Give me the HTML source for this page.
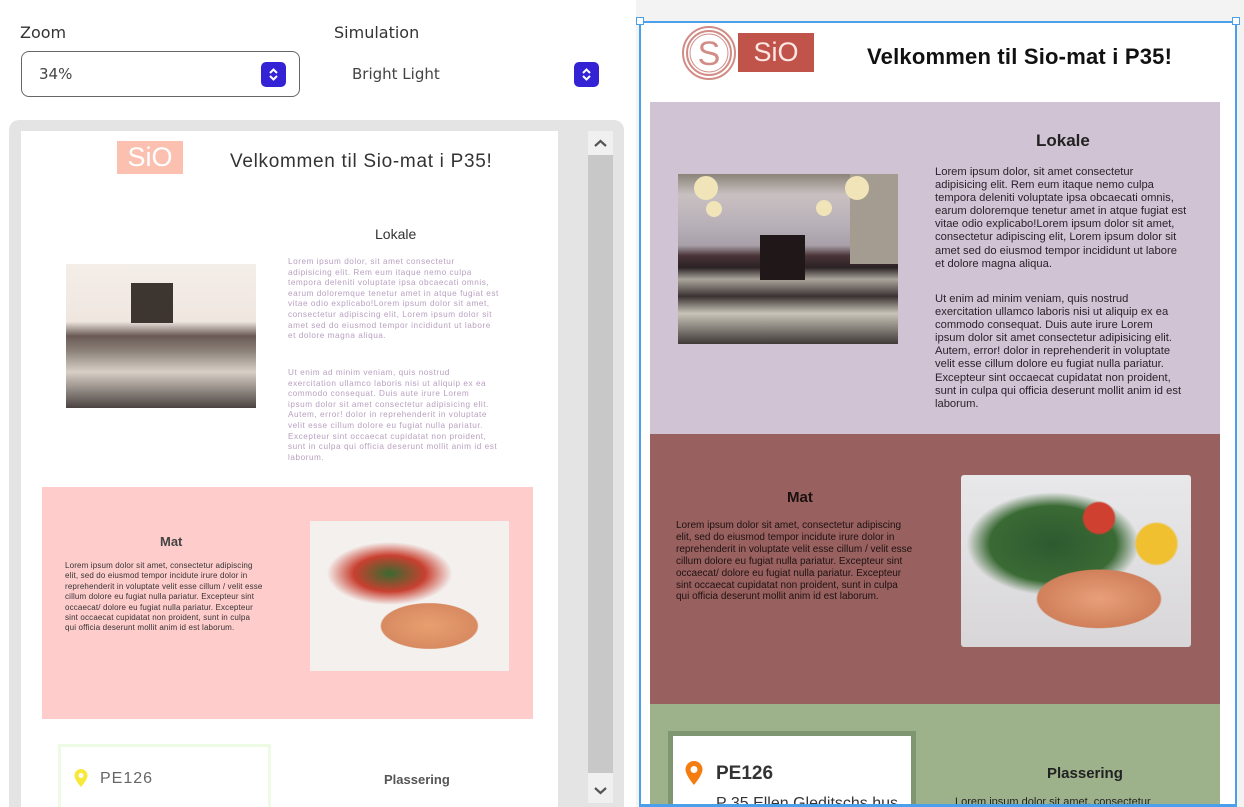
<!DOCTYPE html>
<html><head><meta charset="utf-8"><style>
*{margin:0;padding:0;box-sizing:border-box}
html,body{width:1244px;height:807px;overflow:hidden}
body{background:#fff;font-family:"Liberation Sans",Arial,sans-serif;position:relative}
.a{position:absolute}
.lbl{font-family:"DejaVu Sans","Liberation Sans",sans-serif;font-size:16px;color:#333}
.sel{font-family:"DejaVu Sans","Liberation Sans",sans-serif;font-size:15px;color:#444}
.btn{width:25px;height:25px;background:#3323d4;border-radius:5px}
.btn svg{display:block}
.rt{font-size:11.2px;line-height:13.1px;color:#2a1f2a;white-space:nowrap}
.lt{font-size:8.2px;line-height:10.6px;color:#b8a0c0;white-space:nowrap;letter-spacing:.55px}
</style></head><body>
<div class="a lbl" style="left:20px;top:23px">Zoom</div>
<div class="a lbl" style="left:334px;top:23px">Simulation</div>
<div class="a" style="left:21px;top:51px;width:279px;height:46px;border:1px solid #666;border-radius:8px"></div>
<div class="a sel" style="left:39px;top:65px">34%</div>
<div class="a btn" style="left:261px;top:62px"><svg width="25" height="25"><path d="M9 11l3.5-3.5L16 11M9 14l3.5 3.5L16 14" stroke="#fff" stroke-width="2" fill="none"/></svg></div>
<div class="a sel" style="left:352px;top:65px">Bright Light</div>
<div class="a btn" style="left:574px;top:62px"><svg width="25" height="25"><path d="M9 11l3.5-3.5L16 11M9 14l3.5 3.5L16 14" stroke="#fff" stroke-width="2" fill="none"/></svg></div>

<div class="a" style="left:9px;top:120px;width:615px;height:687px;background:#e4e4e4;border-radius:10px 10px 0 0"></div>
<div class="a" style="left:21px;top:131px;width:537px;height:676px;background:#fff;overflow:hidden">
  <div class="a" style="left:96px;top:10px;width:66px;height:33px;background:#fbc0b0;color:#fff;font-size:27px;line-height:33px;text-align:center">SiO</div>
  <div class="a" style="left:209px;top:20px;font-size:19px;color:#333;letter-spacing:.7px">Velkommen til Sio-mat i P35!</div>
  <div class="a" style="left:354px;top:95px;font-size:14px;color:#333">Lokale</div>
  <div class="a" style="left:45px;top:133px;width:190px;height:144px;background:linear-gradient(180deg,#f4eee8 0%,#efe6df 40%,#6a5a55 50%,#8a8078 60%,#d8d0c6 75%,#4a4240 100%)"></div>
  <div class="a" style="left:110px;top:152px;width:42px;height:40px;background:#3d3530"></div>
  <div class="a lt" style="left:267px;top:126px">Lorem ipsum dolor, sit amet consectetur<br>adipisicing elit. Rem eum itaque nemo culpa<br>tempora deleniti voluptate ipsa obcaecati omnis,<br>earum doloremque tenetur amet in atque fugiat est<br>vitae odio explicabo!Lorem ipsum dolor sit amet,<br>consectetur adipiscing elit, Lorem ipsum dolor sit<br>amet sed do eiusmod tempor incididunt ut labore<br>et dolore magna aliqua.</div>
  <div class="a lt" style="left:267px;top:237px">Ut enim ad minim veniam, quis nostrud<br>exercitation ullamco laboris nisi ut aliquip ex ea<br>commodo consequat. Duis aute irure Lorem<br>ipsum dolor sit amet consectetur adipisicing elit.<br>Autem, error! dolor in reprehenderit in voluptate<br>velit esse cillum dolore eu fugiat nulla pariatur.<br>Excepteur sint occaecat cupidatat non proident,<br>sunt in culpa qui officia deserunt mollit anim id est<br>laborum.</div>
  <div class="a" style="left:21px;top:356px;width:491px;height:232px;background:#ffcccc"></div>
  <div class="a" style="left:139px;top:403px;font-size:13px;font-weight:bold;color:#444">Mat</div>
  <div class="a" style="left:44px;top:430px;font-size:8px;line-height:10.4px;color:#333;white-space:nowrap;letter-spacing:.15px">Lorem ipsum dolor sit amet, consectetur adipiscing<br>elit, sed do eiusmod tempor incidute irure dolor in<br>reprehenderit in voluptate velit esse cillum / velit esse<br>cillum dolore eu fugiat nulla pariatur. Excepteur sint<br>occaecat/ dolore eu fugiat nulla pariatur. Excepteur<br>sint occaecat cupidatat non proident, sunt in culpa<br>qui officia deserunt mollit anim id est laborum.</div>
  <div class="a" style="left:289px;top:390px;width:199px;height:150px;background:radial-gradient(ellipse 40% 25% at 60% 70%,#e8a070 0%,#d88a60 60%,transparent 62%),radial-gradient(ellipse 45% 30% at 40% 35%,#3a6a30 0%,#c84030 40%,transparent 70%),#f4f0ee"></div>
  <div class="a" style="left:37px;top:613px;width:213px;height:70px;border:3px solid #eefbe4"></div>
  <svg class="a" style="left:52px;top:637px" width="16" height="20"><path d="M8 1a6.5 6.5 0 0 0-6.5 6.5C1.5 12 8 19 8 19s6.5-7 6.5-11.5A6.5 6.5 0 0 0 8 1z" fill="#f7e83a"/><circle cx="8" cy="7.5" r="2.5" fill="#fff"/></svg>
  <div class="a" style="left:79px;top:639px;font-size:16px;color:#666;letter-spacing:1px">PE126</div>
  <div class="a" style="left:363px;top:641px;font-size:13px;font-weight:bold;color:#555">Plassering</div>
</div>
<div class="a" style="left:588px;top:131px;width:25px;height:672px;background:#f0f0f0"></div>
<div class="a" style="left:588px;top:155px;width:25px;height:618px;background:#c8c8c8"></div>
<svg class="a" style="left:588px;top:131px" width="25" height="24"><path d="M7 15l5.5-5 5.5 5" stroke="#555" stroke-width="2.2" fill="none"/></svg>
<svg class="a" style="left:588px;top:778px" width="25" height="24"><path d="M7 10l5.5 5 5.5-5" stroke="#555" stroke-width="2.2" fill="none"/></svg>

<div class="a" style="left:636px;top:0;width:608px;height:807px;background:#f3f3f3"></div>
<div class="a" style="left:639px;top:21px;width:598px;height:790px;background:#fff;border:2px solid #4aa0ea"></div>
<div class="a" style="left:636px;top:17px;width:8px;height:8px;background:#fff;border:1px solid #4aa0ea"></div>
<div class="a" style="left:1232px;top:17px;width:8px;height:8px;background:#fff;border:1px solid #4aa0ea"></div>
<svg class="a" style="left:681px;top:25px" width="56" height="56"><circle cx="28" cy="28" r="26" fill="none" stroke="#d28c86" stroke-width="2"/><circle cx="28" cy="28" r="22" fill="none" stroke="#d28c86" stroke-width="2"/><circle cx="28" cy="28" r="19" fill="none" stroke="#d28c86" stroke-width="1"/><text x="28" y="40" text-anchor="middle" font-family="Liberation Sans" font-size="34" fill="#d28c86">S</text></svg>
<div class="a" style="left:738px;top:33px;width:76px;height:39px;background:#c0544a;color:#fde8e4;font-size:27px;line-height:39px;text-align:center">SiO</div>
<div class="a" style="left:867px;top:44px;font-size:22px;font-weight:bold;color:#111;letter-spacing:.2px">Velkommen til Sio-mat i P35!</div>

<div class="a" style="left:650px;top:102px;width:570px;height:332px;background:#d0c3d3"></div>
<div class="a" style="left:1036px;top:131px;font-size:17px;font-weight:bold;color:#222">Lokale</div>
<div class="a" style="left:678px;top:174px;width:220px;height:170px;background:linear-gradient(180deg,#8a8478 0%,#c8c0c0 12%,#b8b0b8 30%,#a8a0a8 42%,#4a3438 48%,#2a2224 55%,#aaa59c 62%,#3a3232 72%,#c8c4b8 82%,#403a38 100%)"></div>
<div class="a" style="left:760px;top:235px;width:45px;height:45px;background:#201818"></div>
<div class="a" style="left:850px;top:174px;width:48px;height:90px;background:#a49c90"></div>
<div class="a" style="left:694px;top:176px;width:24px;height:24px;border-radius:50%;background:#f0e4b8"></div>
<div class="a" style="left:845px;top:176px;width:24px;height:24px;border-radius:50%;background:#f0e4b8"></div>
<div class="a" style="left:706px;top:201px;width:16px;height:16px;border-radius:50%;background:#f0e4b8"></div>
<div class="a" style="left:816px;top:200px;width:16px;height:16px;border-radius:50%;background:#f0e4b8"></div>
<div class="a rt" style="left:935px;top:166px">Lorem ipsum dolor, sit amet consectetur<br>adipisicing elit. Rem eum itaque nemo culpa<br>tempora deleniti voluptate ipsa obcaecati omnis,<br>earum doloremque tenetur amet in atque fugiat est<br>vitae odio explicabo!Lorem ipsum dolor sit amet,<br>consectetur adipiscing elit, Lorem ipsum dolor sit<br>amet sed do eiusmod tempor incididunt ut labore<br>et dolore magna aliqua.</div>
<div class="a rt" style="left:935px;top:293px">Ut enim ad minim veniam, quis nostrud<br>exercitation ullamco laboris nisi ut aliquip ex ea<br>commodo consequat. Duis aute irure Lorem<br>ipsum dolor sit amet consectetur adipisicing elit.<br>Autem, error! dolor in reprehenderit in voluptate<br>velit esse cillum dolore eu fugiat nulla pariatur.<br>Excepteur sint occaecat cupidatat non proident,<br>sunt in culpa qui officia deserunt mollit anim id est<br>laborum.</div>

<div class="a" style="left:650px;top:434px;width:570px;height:270px;background:#98605f"></div>
<div class="a" style="left:787px;top:489px;font-size:15px;font-weight:bold;color:#1a1010">Mat</div>
<div class="a" style="left:676px;top:520px;font-size:10px;line-height:11.9px;color:#1e1212;white-space:nowrap">Lorem ipsum dolor sit amet, consectetur adipiscing<br>elit, sed do eiusmod tempor incidute irure dolor in<br>reprehenderit in voluptate velit esse cillum / velit esse<br>cillum dolore eu fugiat nulla pariatur. Excepteur sint<br>occaecat/ dolore eu fugiat nulla pariatur. Excepteur<br>sint occaecat cupidatat non proident, sunt in culpa<br>qui officia deserunt mollit anim id est laborum.</div>
<div class="a" style="left:961px;top:475px;width:230px;height:172px;border-radius:3px;background:radial-gradient(ellipse 38% 24% at 60% 72%,#e8a07a 0%,#d0805a 70%,transparent 72%),radial-gradient(circle at 60% 25%,#d04030 0%,#d04030 8%,transparent 9%),radial-gradient(circle at 85% 40%,#f0c030 0%,#f0c030 9%,transparent 10%),radial-gradient(ellipse 50% 40% at 40% 40%,#2e5a30 0%,#3a6a34 55%,transparent 75%),linear-gradient(180deg,#e8e8ea,#d8d6d8)"></div>

<div class="a" style="left:650px;top:704px;width:570px;height:103px;background:#9db28b"></div>
<div class="a" style="left:668px;top:731px;width:248px;height:90px;background:#fff;border:5px solid #7e9672"></div>
<svg class="a" style="left:684px;top:760px" width="20" height="26"><path d="M10 1a8.5 8.5 0 0 0-8.5 8.5C1.5 15 10 25 10 25s8.5-10 8.5-15.5A8.5 8.5 0 0 0 10 1z" fill="#f57c10"/><circle cx="10" cy="9.5" r="3.5" fill="#fff"/></svg>
<div class="a" style="left:716px;top:763px;font-size:19px;font-weight:bold;color:#333">PE126</div>
<div class="a" style="left:716px;top:795px;font-size:16px;color:#333">P 35 Ellen Gleditschs hus</div>
<div class="a" style="left:1047px;top:765px;font-size:15px;font-weight:bold;color:#222">Plassering</div>
<div class="a" style="left:955px;top:796px;font-size:11px;color:#222">Lorem ipsum dolor sit amet, consectetur</div>
<div class="a" style="left:639px;top:804px;width:598px;height:3px;background:#4aa0ea"></div>
</body></html>
